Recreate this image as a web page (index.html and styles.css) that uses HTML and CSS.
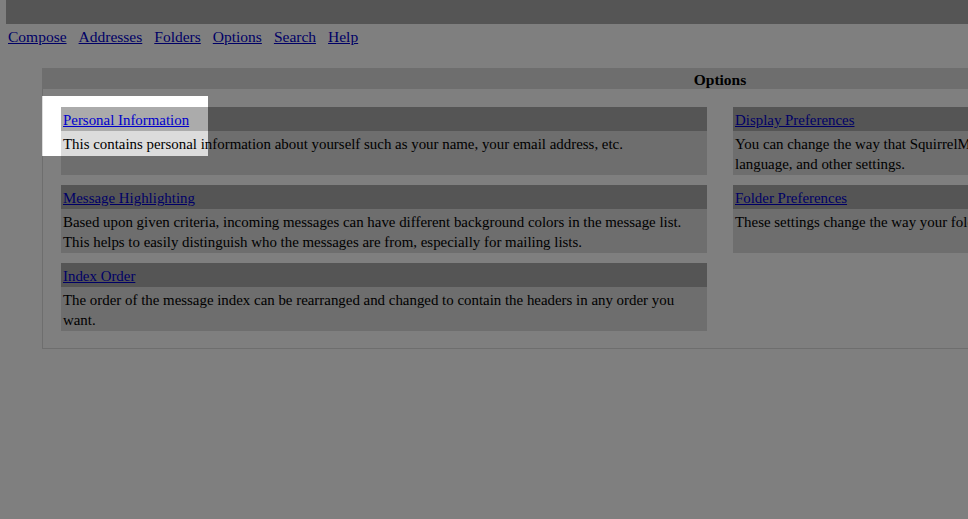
FILE: index.html
```html
<!DOCTYPE html>
<html>
<head>
<meta charset="utf-8">
<title>SquirrelMail - Options</title>
<link rel="stylesheet" href="styles.css">
</head>
<body>
<div class="page">
  <div class="topbar"></div>
  <nav class="nav">
    <a href="#">Compose</a>
    <a href="#">Addresses</a>
    <a href="#">Folders</a>
    <a href="#">Options</a>
    <a href="#">Search</a>
    <a href="#">Help</a>
  </nav>
  <div class="box">
    <div class="box-title">Options</div>
    <div class="box-inner">
      <div class="opt">
        <div class="opt-head"><a href="#">Personal Information</a></div>
        <div class="opt-body">This contains personal information about yourself such as your name, your email address, etc.</div>
      </div>
      <div class="opt">
        <div class="opt-head"><a href="#">Display Preferences</a></div>
        <div class="opt-body">You can change the way that SquirrelMail looks and displays information to you, such as the colors, the<br>language, and other settings.</div>
      </div>
      <div class="opt">
        <div class="opt-head"><a href="#">Message Highlighting</a></div>
        <div class="opt-body">Based upon given criteria, incoming messages can have different background colors in the message list.<br>This helps to easily distinguish who the messages are from, especially for mailing lists.</div>
      </div>
      <div class="opt">
        <div class="opt-head"><a href="#">Folder Preferences</a></div>
        <div class="opt-body">These settings change the way your folders are displayed and manipulated.</div>
      </div>
      <div class="opt">
        <div class="opt-head"><a href="#">Index Order</a></div>
        <div class="opt-body">The order of the message index can be rearranged and changed to contain the headers in any order you<br>want.</div>
      </div>
    </div>
  </div>
  <div class="spotlight"></div>
</div>
</body>
</html>
```
FILE: styles.css
```css
html, body {
  margin: 0;
  padding: 0;
  overflow: hidden;
  background: #ffffff;
}
body {
  font-family: "Liberation Serif", "Times New Roman", serif;
  font-size: 16px;
  color: #000000;
}
.page {
  position: relative;
  width: 1440px;
  height: 519px;
}
a {
  color: #0000cc;
  text-decoration: underline;
}
.topbar {
  margin-left: 6px;
  height: 24px;
  background: #ababab;
}
.nav {
  display: flex;
  gap: 12px;
  margin: 3px 0 0 8px;
  font-size: 15.5px;
  line-height: 20px;
}
.box {
  margin: 21px 0 0 42px;
  width: 1354px;
  border: 1px solid #dcdcdc;
  background: #ffffff;
  font-size: 14.9px;
}
.box-title {
  background: #dcdcdc;
  text-align: center;
  font-weight: bold;
  font-size: 15.5px;
  height: 19px;
  padding-top: 1px;
  line-height: 20px;
}
.box-inner {
  display: grid;
  grid-template-columns: 646px 646px;
  column-gap: 26px;
  row-gap: 10px;
  padding: 18px 18px 17px 18px;
}
.opt {
  display: flex;
  flex-direction: column;
}
.opt-head {
  background: #ababab;
  padding: 3px 2px 1px 2px;
  line-height: 20px;
}
.opt-body {
  flex: 1;
  background: #dcdcdc;
  padding: 3px 2px 1px 2px;
  line-height: 20px;
  white-space: nowrap;
  overflow: hidden;
}
.spotlight {
  position: absolute;
  left: 42px;
  top: 96px;
  width: 166px;
  height: 60px;
  box-shadow: 0 0 0 3000px rgba(0, 0, 0, 0.5);
  pointer-events: none;
}
```
